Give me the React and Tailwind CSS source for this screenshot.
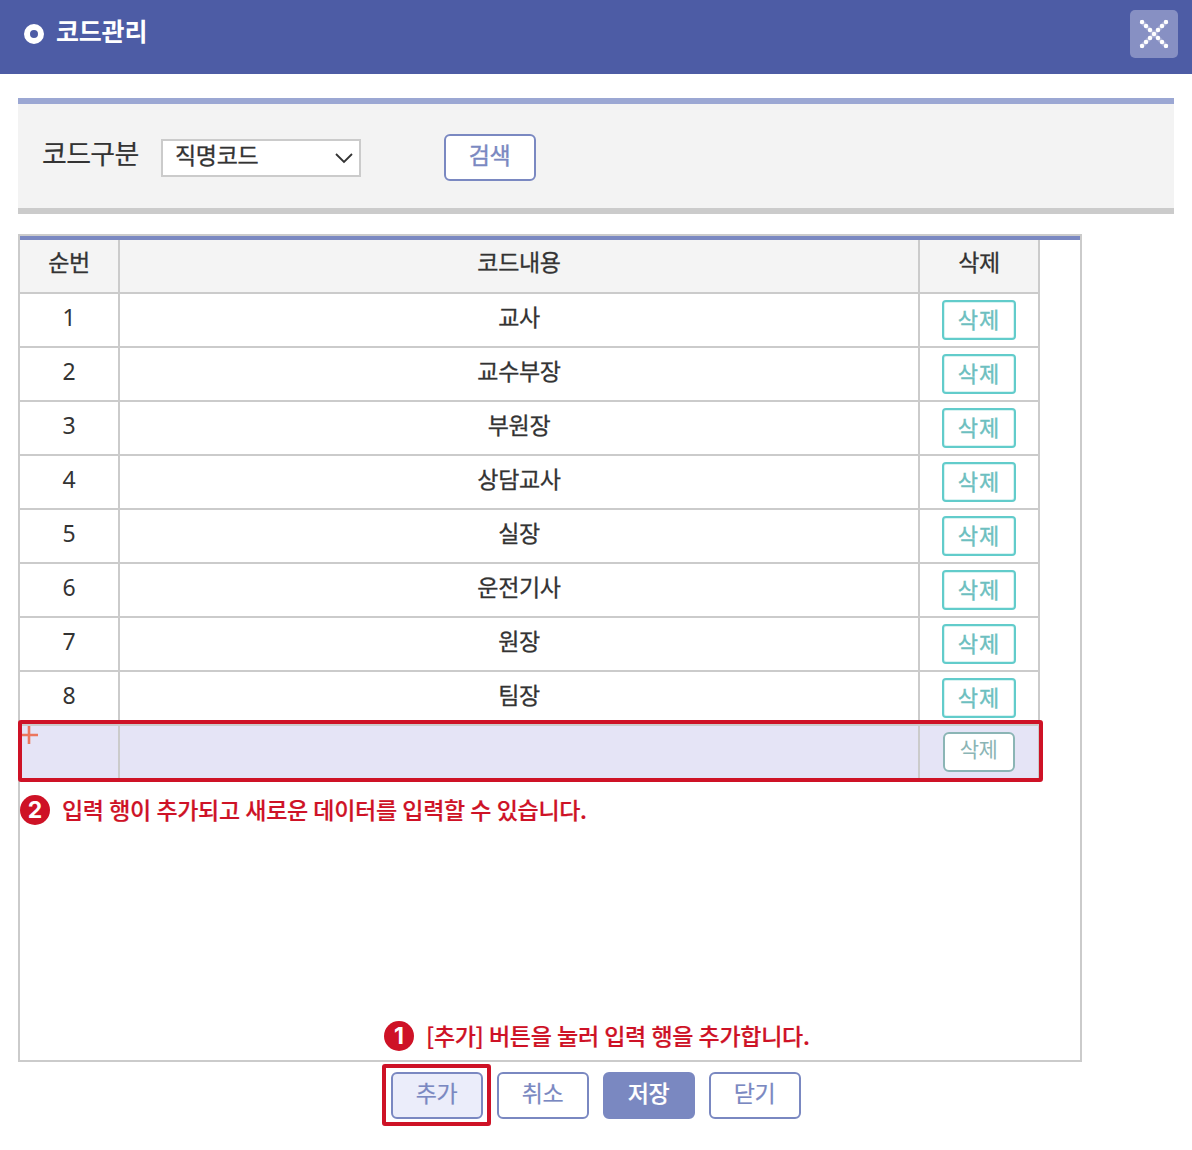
const codes = ['교사', '교수부장', '부원장', '상담교사', '실장', '운전기사', '원장', '팀장'];

const closeDots = [
  [10, 10], [14, 14], [18, 18], [22, 22],
  [34, 10], [30, 14], [26, 18],
  [18, 26], [14, 30], [10, 34], [26, 26], [30, 30], [34, 34],
];

function TitleBar() {
  return (
    <header className="flex h-[74px] items-start justify-between bg-[#4d5ca5] pl-6 pr-[14px]">
      <div className="flex items-start">
        <span className="mt-6 size-5 rounded-full border-[6px] border-white" />
        <h1 className="ml-3 mt-3 text-[25px] font-bold leading-9 tracking-[-0.2px] text-white">코드관리</h1>
      </div>
      <button aria-label="close" className="mt-[10px] size-12 rounded-[5px] bg-[#8790c3]">
        <svg viewBox="0 0 48 48" className="size-12">
          <path d="M11 11L37 37M37 11L11 37" stroke="#fff" strokeOpacity="0.3" strokeWidth="4.4" />
          {closeDots.map(([x, y]) => (
            <rect key={`${x}-${y}`} x={x} y={y} width="4" height="4" rx="1.2" fill="#fff" />
          ))}
        </svg>
      </button>
    </header>
  );
}

function SearchPanel() {
  return (
    <section className="mx-[18px] mt-6 flex h-[116px] items-start border-y-[6px] border-t-[#9ba7d3] border-b-[#cbcbcb] bg-[#f3f3f3]">
      <span className="ml-6 mt-[31px] w-[119px] whitespace-nowrap text-[27px] leading-9 tracking-[-0.7px] [-webkit-text-stroke:0.2px]">코드구분</span>
      <div className="mt-[35px] flex h-[38px] w-[200px] justify-between border-2 border-[#cbcbcb] bg-white pl-3 pr-[6px]">
        <span className="text-[23px] leading-[26px] tracking-[-0.3px] [-webkit-text-stroke:0.3px]">직명코드</span>
        <svg viewBox="0 0 18 11" className="mt-3 h-[11px] w-[18px]" fill="none" stroke="#333" strokeWidth="1.8">
          <path d="M1 1L9 9L17 1" />
        </svg>
      </div>
      <button className="ml-[83px] mt-[30px] h-[47px] w-[92px] rounded-[6px] border-2 border-[#7a88c1] bg-white pb-[6px] pr-[1px] text-[23px] leading-[37px] tracking-[-0.3px] text-[#7a88c1] [-webkit-text-stroke:0.4px]">
        검색
      </button>
    </section>
  );
}

const row = 'grid h-[54px] w-[1020px] grid-cols-[100px_800px_120px] text-center text-[23px] tracking-[-0.3px] [-webkit-text-stroke:0.3px]';
const cell = 'border-r-2 border-b-2 border-[#cbcbcb]';

function CodeTable() {
  return (
    <div className="border-t-4 border-[#7a88c1]">
      <div className={`${row} bg-[#f4f4f4] leading-[42px]`}>
        <div className={cell}>순번</div>
        <div className={cell}>코드내용</div>
        <div className={cell}>삭제</div>
      </div>
      {codes.map((name, i) => (
        <div key={name} className={`${row} leading-[44px]`}>
          <div className={`${cell} font-['Noto_Sans'] text-[23px] leading-[46px] [-webkit-text-stroke:0]`}>{i + 1}</div>
          <div className={cell}>{name}</div>
          <div className={`${cell} flex justify-center pt-[6px]`}>
            <button className="h-10 w-[74px] rounded-[4px] border-2 border-[#62cccb] bg-white pb-1 text-[22px] leading-8 tracking-[1px] text-[#6dbfc0] shadow-[inset_0_0_0_1px_#d9f3f2] [-webkit-text-stroke:0.4px]">
              삭제
            </button>
          </div>
        </div>
      ))}
      <div className={`${row} relative bg-[#e5e4f6]`}>
        <div className={cell}>
          <svg viewBox="0 0 18 18" className="h-[18px] w-[18px]" stroke="#ec765d" strokeWidth="2.6">
            <path d="M0 9H18M9 0V18" />
          </svg>
        </div>
        <div className={cell} />
        <div className={`${cell} flex justify-center pt-[6px]`}>
          <button className="h-10 w-[72px] rounded-[6px] border-2 border-[#8bb5b5] bg-white pb-2 pr-[1px] text-[21px] leading-7 tracking-[-0.5px] text-[#8bb5b5] [-webkit-text-stroke:0]">
            삭제
          </button>
        </div>
        <div className="absolute -left-[2px] -top-[6px] h-[62px] w-[1025px] rounded-[3px] border-4 border-[#ce1226]" />
      </div>
    </div>
  );
}

function Note({ number, children }) {
  return (
    <div className="flex items-center text-[#ce1226]">
      <span className="flex size-[30px] items-center justify-center rounded-full bg-[#ce1226] font-['Inter'] text-[23px] font-bold leading-none text-white">
        {number}
      </span>
      <p className="-mt-[2px] ml-3 whitespace-nowrap text-[23px] font-medium leading-[30px] tracking-[-0.3px] [word-spacing:0.6px] [-webkit-text-stroke:0.2px]">{children}</p>
    </div>
  );
}

const action = 'h-[47px] w-[92px] rounded-[6px] border-2 border-[#7a88c1] pb-[6px] pr-[1px] text-[23px] leading-[37px] tracking-[-0.3px] [-webkit-text-stroke:0.2px]';

export default function App() {
  return (
    <main
      className="h-[1150px] w-[1192px] overflow-hidden bg-white text-[#333]"
      style={{ fontFamily: '"Noto Sans CJK KR", sans-serif' }}
    >
      <TitleBar />
      <SearchPanel />
      <section className="ml-[18px] mt-5 flex h-[828px] w-[1064px] flex-col border-2 border-[#cbcbcb]">
        <CodeTable />
        <div className="mt-[15px]">
          <Note number="2">입력 행이 추가되고 새로운 데이터를 입력할 수 있습니다.</Note>
        </div>
        <div className="mb-[9px] ml-[364px] mt-auto">
          <Note number="1">[추가] 버튼을 눌러 입력 행을 추가합니다.</Note>
        </div>
      </section>
      <footer className="ml-[382px] mt-[2px] flex items-start">
        <div className="h-[62px] w-[109px] rounded-[3px] border-4 border-[#ce1226] pl-[5px] pt-1">
          <button className={`${action} bg-[#ebedfa] text-[#7a88c1]`}>추가</button>
        </div>
        <div className="ml-[6px] mt-2 flex gap-[14px]">
          <button className={`${action} bg-white text-[#7a88c1]`}>취소</button>
          <button className={`${action} bg-[#7a88c1] font-medium text-white`}>저장</button>
          <button className={`${action} bg-white text-[#7a88c1]`}>닫기</button>
        </div>
      </footer>
    </main>
  );
}
